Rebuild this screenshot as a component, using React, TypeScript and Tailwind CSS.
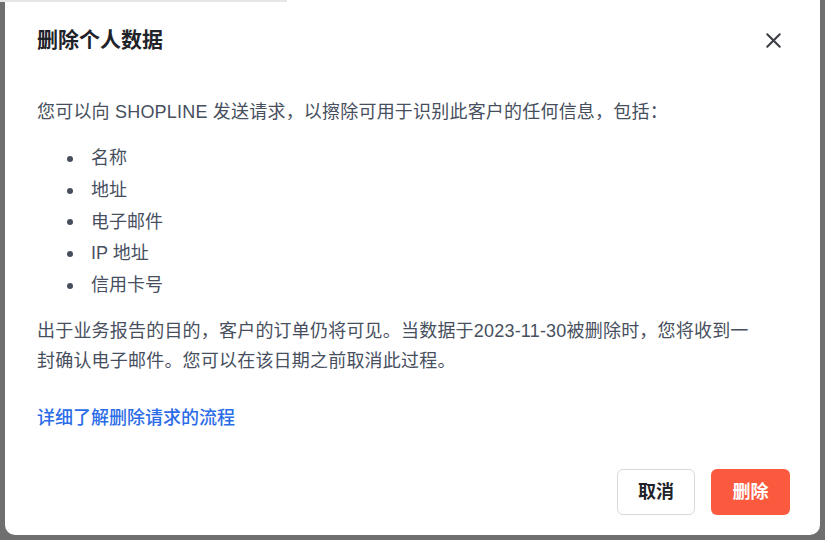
import { X } from 'lucide-react';

const items = ['名称', '地址', '电子邮件', 'IP 地址', '信用卡号'];

export default function App() {
  return (
    <div
      className="w-[825px] h-[540px] bg-[#6f6f6f] flex px-[5px] pb-[5px] overflow-hidden"
      style={{ fontFamily: '"Liberation Sans", "Noto Sans CJK SC", sans-serif' }}
    >
      <div className="flex-1 bg-white rounded-b-[10px] flex flex-col">
        {/* faint strip left over from the page behind */}
        <div className="h-[2px] w-[287px] bg-[#e6e6e6] -ml-[5px]" />

        {/* Header */}
        <div className="flex items-center justify-between pl-[32px] pr-[34px] pt-[23px]">
          <h2 className="text-[21px] leading-[30px] font-bold text-[#1f2329]">删除个人数据</h2>
          <X className="w-[25px] h-[25px] text-[#3b3f45]" strokeWidth={2} />
        </div>

        {/* Body */}
        <div className="pl-[32px] pr-[58px] pt-[42px] text-[18px] text-[#474f5e]">
          <p className="leading-[30px] tracking-[0.2px]">您可以向 SHOPLINE 发送请求，以擦除可用于识别此客户的任何信息，包括：</p>
          <ul className="mt-[16px]">
            {items.map((item) => (
              <li key={item} className="flex items-center h-[31.7px]">
                <span className="w-[6px] h-[6px] rounded-full bg-[#474f5e] ml-[30px] mr-[18px]" />
                <span>{item}</span>
              </li>
            ))}
          </ul>
          <p className="mt-[15px] leading-[30px] tracking-[0.2px]">
            出于业务报告的目的，客户的订单仍将可见。当数据于2023-11-30被删除时，您将收到一封确认电子邮件。您可以在该日期之前取消此过程。
          </p>
          <a className="block mt-[27px] leading-[30px] text-[#2b6ce8] font-medium">详细了解删除请求的流程</a>
        </div>

        {/* Footer */}
        <div className="mt-auto flex justify-end gap-[16px] pr-[30px] pb-[20px]">
          <button className="w-[78px] h-[46px] rounded-[6px] border border-[#d5d9de] bg-white text-[18px] font-semibold text-[#1f2329]">
            取消
          </button>
          <button className="w-[79px] h-[46px] rounded-[6px] bg-[#fb5a3f] text-[18px] font-semibold text-white">
            删除
          </button>
        </div>
      </div>
    </div>
  );
}
